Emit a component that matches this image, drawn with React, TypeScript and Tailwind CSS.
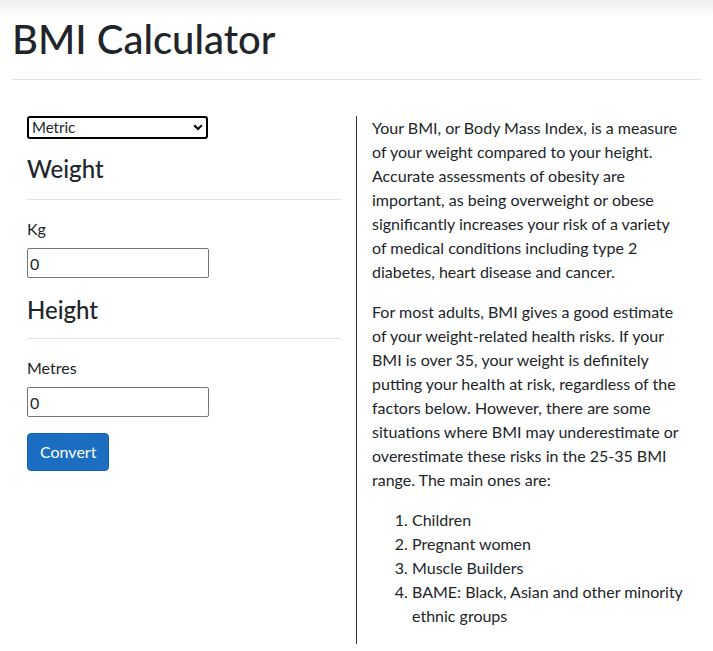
import React, { useState } from 'react';

const intro =
  'Your BMI, or Body Mass Index, is a measure of your weight compared to your height. Accurate assessments of obesity are important, as being overweight or obese significantly increases your risk of a variety of\u00a0medical conditions including type 2 diabetes, heart disease and cancer.';

export default function App() {
  const [units, setUnits] = useState('metric');
  const [weight, setWeight] = useState('0');
  const [height, setHeight] = useState('0');

  return (
    <div className="min-h-[651px] bg-[linear-gradient(#efefef,#ffffff_18px)] text-[#212529] font-['Lato','Liberation_Sans',sans-serif]">
      <div className="px-[12px] pt-[15px]">
        <h1 className="text-[40px] leading-[48px] font-medium">BMI Calculator</h1>
        <hr className="mt-[16px] border-0 border-t border-[#e3e3e3]" />
      </div>

      <div className="mx-[12px] mt-[36px] flex">
        {/* Calculator form */}
        <div className="w-[344px] shrink-0 px-[15px]">
          <div className="relative w-[181px]">
            <select
              value={units}
              onChange={(e) => setUnits(e.target.value)}
              className="appearance-none block w-full h-[23px] rounded-[3px] border-2 border-black bg-white pl-[3px] text-[15px] leading-[19px] outline-none"
            >
              <option value="metric">Metric</option>
              <option value="imperial">Imperial</option>
            </select>
            <svg className="pointer-events-none absolute right-[5px] top-[8px]" width="10" height="7" viewBox="0 0 10 7">
              <path d="M1.2 1.2l3.8 3.8 3.8-3.8" fill="none" stroke="#000" strokeWidth="2" />
            </svg>
          </div>

          <h2 className="mt-[15px] text-[24px] leading-[29px] font-medium">Weight</h2>
          <hr className="mt-[16px] border-0 border-t border-[#e3e3e3]" />
          <label className="block mt-[17px] text-[16px] leading-[24px]">Kg</label>
          <input
            value={weight}
            onChange={(e) => setWeight(e.target.value)}
            className="block mt-[7px] w-[182px] h-[30px] rounded-[2px] border border-[#767676] px-[2px] text-[16px] outline-none"
          />

          <h2 className="mt-[17px] text-[24px] leading-[29px] font-medium">Height</h2>
          <hr className="mt-[14px] border-0 border-t border-[#e3e3e3]" />
          <label className="block mt-[17px] text-[16px] leading-[24px]">Metres</label>
          <input
            value={height}
            onChange={(e) => setHeight(e.target.value)}
            className="block mt-[7px] w-[182px] h-[30px] rounded-[2px] border border-[#767676] px-[2px] text-[16px] outline-none"
          />

          <button className="mt-[16px] h-[38px] px-[12px] rounded-[4px] border border-[#1861ac] bg-[#1b6ec2] text-white text-[16px] leading-[24px]">
            Convert
          </button>
        </div>

        {/* Explanation */}
        <div className="w-[345px] border-l border-[#333] pl-[15px] pr-[12px] text-[16px] leading-[24px]">
          <p className="mb-[16px]">{intro}</p>
          <p className="mb-[16px]">
            For most adults, BMI gives a good estimate of your weight-related health risks. If your BMI is over 35, your
            weight is definitely putting your health at risk, regardless of the factors below. However, there are some
            situations where BMI may underestimate or overestimate these risks in the 25-35 BMI range. The main ones are:
          </p>
          <ol className="list-decimal pl-[40px] mb-[16px]">
            <li>Children</li>
            <li>Pregnant women</li>
            <li>Muscle Builders</li>
            <li>BAME: Black, Asian and other minority ethnic groups</li>
          </ol>
        </div>
      </div>
    </div>
  );
}
